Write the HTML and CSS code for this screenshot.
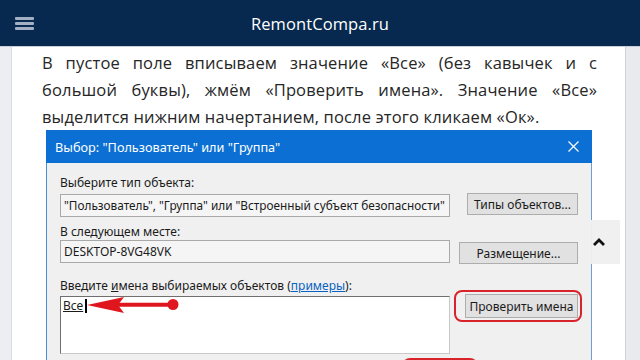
FILE: index.html
```html
<!DOCTYPE html>
<html lang="ru">
<head>
<meta charset="utf-8">
<title>RemontCompa.ru</title>
<link rel="stylesheet" href="styles.css">
</head>
<body>
<header class="topbar">
  <div class="menu-btn" aria-label="Меню"><span></span><span></span><span></span></div>
  <div class="brand">RemontCompa.ru</div>
  <div></div>
</header>
<div class="page">
  <div class="gutter gutter-left"></div>
  <main class="content">
    <p class="lead">
      <span class="jline">В пустое поле вписываем значение «Все» (без кавычек и с</span>
      <span class="jline">большой буквы), жмём «Проверить имена». Значение «Все»</span>
      <span class="line">выделится нижним начертанием, после этого кликаем «Ок».</span>
    </p>
    <div class="dialog">
      <div class="dlg-title">
        <span>Выбор: "Пользователь" или "Группа"</span>
        <svg class="dlg-close" width="11" height="11" viewBox="0 0 11 11"><path d="M0.5 0.5 L10.5 10.5 M10.5 0.5 L0.5 10.5" stroke="#fff" stroke-width="1.2" fill="none"/></svg>
      </div>
      <div class="dlg-body">
        <div class="dlg-label">Выберите тип объекта:</div>
        <div class="dlg-row row-1">
          <div class="field field-type">"Пользователь", "Группа" или "Встроенный субъект безопасности"</div>
          <div class="btn btn-types">Типы объектов...</div>
        </div>
        <div class="dlg-label label-2">В следующем месте:</div>
        <div class="dlg-row row-2">
          <div class="field">DESKTOP-8VG48VK</div>
          <div class="btn btn-place">Размещение...</div>
        </div>
        <div class="dlg-label label-3">Введите <u>и</u>мена выбираемых объектов (<a class="link">примеры</a>):</div>
        <div class="dlg-row row-3">
          <div class="names">
            <span class="typed">Все</span><span class="caret"></span>
            <svg class="arrow" width="125" height="20" viewBox="0 0 125 20">
              <path d="M27 9 L64 1 L58 9 L64 17 Z" fill="#e0161e"/>
              <path d="M58 8.7 L113 8.7" stroke="#e0161e" stroke-width="4" fill="none"/>
              <circle cx="113" cy="8.5" r="5.5" fill="#e0161e"/>
            </svg>
          </div>
          <div class="highlight"><div class="btn btn-check">Проверить имена</div></div>
        </div>
        <div class="dlg-row row-4">
          <div class="highlight ok-mark"></div>
        </div>
      </div>
    </div>
  </main>
  <div class="gutter gutter-right"></div>
  <div class="to-top">
    <svg width="14" height="10" viewBox="0 0 14 10"><path d="M2 8 L7 3 L12 8" stroke="#111" stroke-width="2.8" fill="none"/></svg>
  </div>
</div>
</body>
</html>
```

FILE: styles.css
```css
* { box-sizing: border-box; margin: 0; padding: 0; }
html, body { width: 640px; height: 360px; overflow: hidden; }
body { background: #fff; font-family: "Open Sans", "DejaVu Sans", sans-serif; }

.topbar {
  height: 47px;
  background: #07294f;
  border-bottom: 1px solid #c9d0da;
  display: grid;
  grid-template-columns: 1fr auto 1fr;
  align-items: center;
}
.menu-btn {
  margin-left: 15px;
  width: 19px;
  display: flex;
  flex-direction: column;
  gap: 2px;
}
.menu-btn span { display: block; height: 3px; background: #a3afc3; border-radius: 1px; }
.brand {
  color: #fff;
  font-size: 16.5px;
  letter-spacing: 0.1px;
  font-weight: 500;
}

.page {
  position: relative;
  display: flex;
  height: 313px;
  overflow: hidden;
}
.gutter-left { width: 12px; background: #eceef1; border-right: 1px solid #d9dde2; }
.gutter-right { width: 15px; background: #e8eaed; border-left: 1px solid #cdd1d6; }
.content {
  flex: 1;
  padding: 2px 28px 0 30px;
  overflow: hidden;
}
.lead { font-size: 16.5px; letter-spacing: 0.15px; line-height: 27px; color: #262626; }
.jline { display: block; text-align: justify; text-align-last: justify; }
.line { display: block; }

.dialog {
  margin-left: 4px;
  width: 546px;
  font-family: "Noto Sans", "DejaVu Sans", sans-serif;
}
.dlg-title {
  height: 33px;
  background: #0b6fd3;
  color: #fff;
  font-size: 12.7px;
  display: flex;
  align-items: center;
  justify-content: space-between;
  padding: 0 13px 0 9px;
}
.dlg-body {
  background: #f0f0f0;
  border-left: 1px solid #4a8fd6;
  border-right: 1px solid #6f9fcf;
  height: 200px;
  padding: 12px 13px 0 13px;
  font-size: 12px;
  color: #1b1b1b;
}
.dlg-label { height: 16px; line-height: 16px; white-space: nowrap; }
.label-2 { margin-top: 7px; }
.label-3 { margin-top: 14px; }
.link { color: #0a62c0; text-decoration: underline; }

.dlg-row { display: flex; justify-content: space-between; align-items: flex-start; }
.row-1 { margin-top: 3px; }
.field {
  width: 390px;
  height: 23px;
  border: 1px solid #a9a9a9;
  background: #f5f5f5;
  padding: 0 3px;
  line-height: 21px;
  white-space: nowrap;
  overflow: hidden;
}
.field-type { font-size: 11.8px; }
.btn {
  height: 22px;
  background: #e1e1e1;
  border: 1px solid #adadad;
  display: flex;
  align-items: center;
  justify-content: center;
  white-space: nowrap;
}
.btn-types { width: 111px; margin-top: -1px; }
.btn-place { width: 119px; margin-top: 2px; }

.names {
  position: relative;
  width: 390px;
  height: 58px;
  margin-top: 2px;
  background: #fff;
  border: 1px solid #c9c9c9;
  border-top-color: #6f6f6f;
  border-left-color: #6f6f6f;
  padding: 1px 2px;
  line-height: 16px;
}
.typed { text-decoration: underline; }
.caret { display: inline-block; width: 1.5px; height: 14px; background: #000; margin-left: 2px; vertical-align: -3px; }
.arrow { position: absolute; left: -1px; top: -1px; }

.highlight {
  border: 2px solid #d9232b;
  border-radius: 8px;
}
.row-3 .highlight {
  margin-top: -4px;
  margin-right: -4px;
  width: 128px;
  height: 32px;
  padding: 2px 2px 2px 9px;
}
.btn-check { width: 113px; height: 24px; }
.row-4 { margin-top: 4px; }
.ok-mark { margin-left: 342px; width: 76px; height: 26px; }

.to-top {
  position: absolute;
  left: 578px;
  top: 173px;
  width: 42px;
  height: 44px;
  background: rgba(239, 239, 239, 0.96);
  display: flex;
  align-items: center;
  justify-content: center;
}
```
